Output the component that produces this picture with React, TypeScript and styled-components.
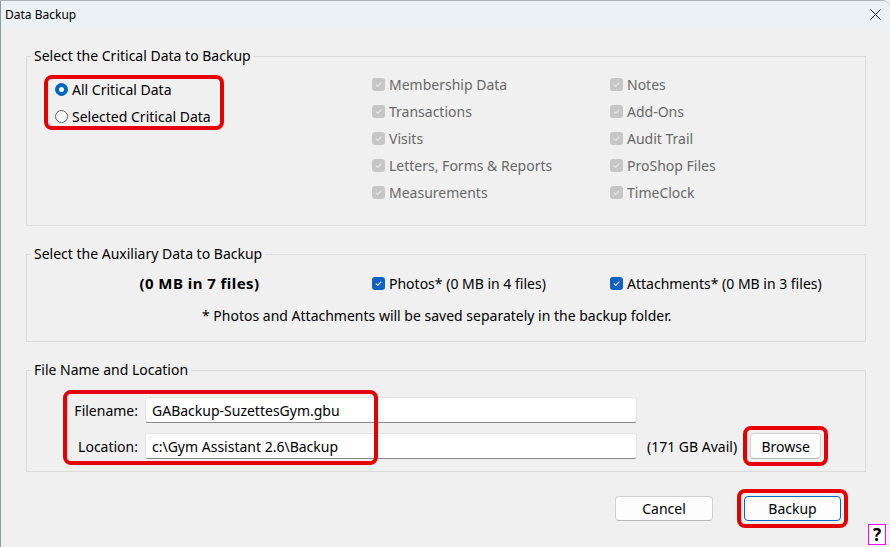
import styled, { createGlobalStyle } from 'styled-components';

const GlobalStyle = createGlobalStyle`
  html, body {
    margin: 0;
    padding: 0;
    background: #f0f0f0;
  }
  body {
    width: 890px;
    height: 547px;
    overflow: hidden;
    font-family: 'Noto Sans', 'Open Sans', sans-serif;
    color: #000;
  }
`;

const Window = styled.div`
  position: relative;
  width: 890px;
  height: 547px;
  box-sizing: border-box;
  background: #f0f0f0;
  border-left: 1px solid #8d9aa0;
  border-top: 1px solid #a9b4b9;
  border-top-right-radius: 8px;
  overflow: hidden;
  display: flex;
  flex-direction: column;
`;

const TitleBar = styled.div`
  height: 27px;
  flex-shrink: 0;
  background: #eaf2f6;
  display: flex;
  align-items: center;
  justify-content: space-between;
  padding: 0 9px 0 4px;
  font-size: 12px;
`;

const CloseIcon = styled.svg`
  width: 11px;
  height: 11px;
`;

const Body = styled.div`
  padding: 0 24px 0 25px;
  display: flex;
  flex-direction: column;
`;

const Group = styled.fieldset`
  margin: 18px 0 0;
  padding: 0;
  border: 1px solid #dcdcdc;
  min-width: 0;
`;

const Legend = styled.legend`
  margin-left: 4px;
  padding: 0 3px;
  font-size: 14px;
  line-height: 20px;
`;

const CriticalBody = styled.div`
  display: flex;
  align-items: flex-start;
  padding: 8px 0 23px;
`;

const LeftArea = styled.div`
  width: 345px;
  flex-shrink: 0;
  display: flex;
`;

const RedWrap = styled.div<{ pad: string }>`
  display: inline-flex;
  flex-direction: column;
  gap: 7px;
  border: 4px solid #e60000;
  border-radius: 8px;
  padding: ${(p) => p.pad};
`;

const RadioRow = styled.label`
  display: flex;
  align-items: center;
  gap: 4px;
  height: 20px;
  font-size: 14px;
  white-space: nowrap;
`;

const RadioDot = styled.span<{ on: boolean }>`
  width: 13px;
  height: 13px;
  box-sizing: border-box;
  border-radius: 50%;
  background: ${(p) => (p.on ? '#0067c0' : '#fbfbfb')};
  border: 1px solid ${(p) => (p.on ? '#0067c0' : '#5f5f5f')};
  display: flex;
  align-items: center;
  justify-content: center;
  &::after {
    content: '';
    display: ${(p) => (p.on ? 'block' : 'none')};
    width: 5px;
    height: 5px;
    border-radius: 50%;
    background: #fff;
  }
`;

const Column = styled.div<{ w: number }>`
  width: ${(p) => p.w}px;
  flex-shrink: 0;
  display: flex;
  flex-direction: column;
  gap: 7px;
`;

const CheckRow = styled.label<{ off?: boolean }>`
  display: flex;
  align-items: center;
  gap: 4px;
  height: 20px;
  font-size: 14px;
  white-space: nowrap;
  color: ${(p) => (p.off ? '#686868' : '#000')};
`;

const Box = styled.span<{ off?: boolean }>`
  width: 13px;
  height: 13px;
  border-radius: 3px;
  flex-shrink: 0;
  background: ${(p) => (p.off ? '#c6c6c6' : '#0f62c2')};
  display: flex;
  align-items: center;
  justify-content: center;
`;

const AuxBody = styled.div`
  display: flex;
  flex-direction: column;
  gap: 13px;
  padding: 9px 0 15px;
`;

const AuxRow = styled.div`
  display: flex;
  align-items: center;
  height: 20px;
`;

const Total = styled.div`
  width: 345px;
  flex-shrink: 0;
  text-align: center;
  font-weight: 700;
  font-size: 15px;
  letter-spacing: 0.45px;
`;

const Note = styled.div`
  padding-left: 175px;
  font-size: 14px;
  line-height: 20px;
  white-space: nowrap;
`;

const FileBody = styled.div`
  padding: 17px 0 5px;
`;

const Fields = styled.div`
  position: relative;
  display: flex;
  flex-direction: column;
  gap: 3px;
`;

const FieldRow = styled.div`
  display: flex;
  align-items: center;
  min-height: 26px;
`;

const FieldLabel = styled.span`
  width: 111px;
  margin-right: 7px;
  text-align: right;
  font-size: 14px;
`;

const TextInput = styled.div`
  width: 492px;
  height: 26px;
  box-sizing: border-box;
  background: #fff;
  border: 1px solid #e5e5e5;
  border-bottom-color: #8a8a8a;
  border-radius: 3px;
  padding: 0 6px;
  display: flex;
  align-items: center;
  font-size: 14px;
`;

const Avail = styled.span`
  margin: 0 6px 0 10px;
  font-size: 14px;
`;

const Highlight = styled.div`
  position: absolute;
  left: 36px;
  top: -7px;
  width: 315px;
  height: 75px;
  box-sizing: border-box;
  border: 4px solid #e60000;
  border-radius: 8px;
  pointer-events: none;
`;

const Button = styled.button<{ w: number; h: number; primary?: boolean }>`
  width: ${(p) => p.w}px;
  height: ${(p) => p.h}px;
  box-sizing: border-box;
  background: #fdfdfd;
  border: 1px solid ${(p) => (p.primary ? '#0067c0' : '#d0d0d0')};
  border-bottom-color: ${(p) => (p.primary ? '#0067c0' : '#b8b8b8')};
  border-radius: 4px;
  font-family: inherit;
  font-size: 14px;
  color: #000;
  padding: 0;
`;

const Footer = styled.div`
  display: flex;
  justify-content: flex-end;
  align-items: center;
  gap: 24px;
  margin: 17px 18px 0 0;
`;

const Help = styled.div`
  position: absolute;
  right: 4px;
  bottom: 2px;
  width: 18px;
  height: 21px;
  box-sizing: border-box;
  border: 1px solid #ff00ff;
  background: #fff;
  display: flex;
  align-items: center;
  justify-content: center;
  font-weight: 700;
  font-size: 17px;
  line-height: 1;
`;

function Check({ off }: { off?: boolean }) {
  return (
    <Box off={off}>
      <svg width="9" height="9" viewBox="0 0 9 9">
        <path
          d="M1.8 4.6 L3.7 6.4 L7.3 2.6"
          fill="none"
          stroke={off ? '#e8e8e8' : '#fff'}
          strokeWidth="1.1"
        />
      </svg>
    </Box>
  );
}

const leftItems = ['Membership Data', 'Transactions', 'Visits', 'Letters, Forms & Reports', 'Measurements'];
const rightItems = ['Notes', 'Add-Ons', 'Audit Trail', 'ProShop Files', 'TimeClock'];

export default function App() {
  return (
    <>
      <GlobalStyle />
      <Window>
        <TitleBar>
          <span>Data Backup</span>
          <CloseIcon viewBox="0 0 11 11">
            <path d="M0.5 0.5 L10.5 10.5 M10.5 0.5 L0.5 10.5" stroke="#1a1a1a" strokeWidth="1" />
          </CloseIcon>
        </TitleBar>
        <Body>
          <Group>
            <Legend>Select the Critical Data to Backup</Legend>
            <CriticalBody>
              <LeftArea>
                <RedWrap pad="0 9px 0 7px" style={{ marginLeft: 17, marginTop: 1 }}>
                  <RadioRow>
                    <RadioDot on />
                    All Critical Data
                  </RadioRow>
                  <RadioRow>
                    <RadioDot on={false} />
                    Selected Critical Data
                  </RadioRow>
                </RedWrap>
              </LeftArea>
              <Column w={238}>
                {leftItems.map((t) => (
                  <CheckRow off key={t}>
                    <Check off />
                    {t}
                  </CheckRow>
                ))}
              </Column>
              <Column w={200}>
                {rightItems.map((t) => (
                  <CheckRow off key={t}>
                    <Check off />
                    {t}
                  </CheckRow>
                ))}
              </Column>
            </CriticalBody>
          </Group>

          <Group>
            <Legend>Select the Auxiliary Data to Backup</Legend>
            <AuxBody>
              <AuxRow>
                <Total>(0 MB in 7 files)</Total>
                <Column w={238}>
                  <CheckRow>
                    <Check />
                    Photos* (0 MB in 4 files)
                  </CheckRow>
                </Column>
                <Column w={220}>
                  <CheckRow>
                    <Check />
                    Attachments* (0 MB in 3 files)
                  </CheckRow>
                </Column>
              </AuxRow>
              <Note>* Photos and Attachments will be saved separately in the backup folder.</Note>
            </AuxBody>
          </Group>

          <Group>
            <Legend>File Name and Location</Legend>
            <FileBody>
              <Fields>
                <FieldRow>
                  <FieldLabel>Filename:</FieldLabel>
                  <TextInput>GABackup-SuzettesGym.gbu</TextInput>
                </FieldRow>
                <FieldRow>
                  <FieldLabel>Location:</FieldLabel>
                  <TextInput>c:\Gym Assistant 2.6\Backup</TextInput>
                  <Avail>(171 GB Avail)</Avail>
                  <RedWrap pad="3px">
                    <Button w={71} h={26}>Browse</Button>
                  </RedWrap>
                </FieldRow>
                <Highlight />
              </Fields>
            </FileBody>
          </Group>

          <Footer>
            <Button w={98} h={25}>Cancel</Button>
            <RedWrap pad="3px">
              <Button w={97} h={25} primary>Backup</Button>
            </RedWrap>
          </Footer>
        </Body>
        <Help>?</Help>
      </Window>
    </>
  );
}
